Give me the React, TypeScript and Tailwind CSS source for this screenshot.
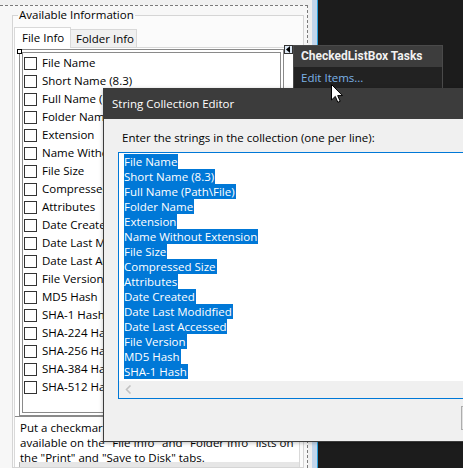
import React from 'react';

const LIST_ITEMS = [
  'File Name', 'Short Name (8.3)', 'Full Name (Path\\File)', 'Folder Name', 'Extension',
  'Name Without Extension', 'File Size', 'Compressed Size', 'Attributes', 'Date Created',
  'Date Last Modified', 'Date Last Accessed', 'File Version', 'MD5 Hash', 'SHA-1 Hash',
  'SHA-224 Hash', 'SHA-256 Hash', 'SHA-384 Hash', 'SHA-512 Hash',
];

const EDITOR_LINES = [
  'File Name', 'Short Name (8.3)', 'Full Name (Path\\File)', 'Folder Name', 'Extension',
  'Name Without Extension', 'File Size', 'Compressed Size', 'Attributes', 'Date Created',
  'Date Last Modidfied', 'Date Last Accessed', 'File Version', 'MD5 Hash', 'SHA-1 Hash',
];

export default function App() {
  return (
    <div className="relative w-[463px] h-[468px] overflow-hidden flex bg-[#1c1c1c] font-['Open_Sans',sans-serif] text-[11.5px] text-black">
      {/* Designer surface */}
      <div className="w-[312px] h-full bg-[#f0f0f0] flex flex-col">
        <div className="mt-[5px] w-[308px] flex-1 border-t border-r border-dashed border-[#7a7a7a] pt-[1px] bg-[#f7f7f7] flex flex-col">
          <fieldset className="ml-[12px] w-[292px] flex-1 border border-[#d5d5d5] bg-[#fbfbfb] flex flex-col">
            <legend className="ml-[5px] px-[1px] leading-[16px]">Available Information</legend>
            <div className="mt-[4px] ml-[1px] w-[286px] flex-1 flex flex-col">
              {/* Tab headers */}
              <div className="flex items-end h-[20px]">
                <div className="relative z-10 -mb-px h-[21px] w-[57px] bg-white border-t border-l border-r border-[#d9d9d9] pl-[7px] leading-[19px]">
                  File Info
                </div>
                <div className="h-[18px] w-[66px] bg-[#f0f0f0] border-t border-r border-[#d9d9d9] pl-[5px] leading-[18px]">
                  Folder Info
                </div>
              </div>
              {/* Tab page */}
              <div className="flex-1 bg-white border border-[#d9d9d9] border-b-0 flex flex-col">
                <div className="relative mt-[1px] ml-[4px] w-[265px] h-[367px] border border-[#8a8a8a] p-[2px]">
                  <div className="absolute -left-[3px] -top-[1px] w-[5px] h-[5px] bg-white border border-black" />
                  <div className="h-full border border-[#8a8a8a] pt-[1px] pl-[1px] overflow-hidden">
                    {LIST_ITEMS.map((item) => (
                      <div key={item} className="h-[18px] flex items-center whitespace-nowrap">
                        <span className="w-[13px] h-[13px] border border-[#333] bg-white mr-[5px] shrink-0" />
                        <span>{item}</span>
                      </div>
                    ))}
                  </div>
                </div>
                <div className="border-t border-[#8a8a8a] pt-[3px] pl-[5px] h-[46px] leading-[15px] whitespace-nowrap bg-white">
                  <div>Put a checkmark next to each item that should be</div>
                  <div>available on the "File Info" and "Folder Info" lists on</div>
                  <div>the "Print" and "Save to Disk" tabs.</div>
                </div>
                <div className="flex-1 bg-[#e6e6e6] border-l border-[#b5b5b5] ml-[4px]" />
              </div>
            </div>
          </fieldset>
        </div>
      </div>
      <div className="w-[6px] h-full bg-[#c2d6ec] border-r border-[#2aa1dc]" />
      <div className="flex-1 bg-[#1c1c1c]" />

      {/* Smart tag glyph */}
      <div className="absolute left-[284px] top-[45px] w-[9px] h-[9px] bg-[#dce8f5] border border-[#333] flex items-center justify-center">
        <svg width="5" height="7" viewBox="0 0 5 7"><path d="M4 0 L0 3.5 L4 7 Z" fill="#000" /></svg>
      </div>

      {/* Smart tag panel */}
      <div className="absolute left-[293px] top-[45px] w-[150px] h-[45px] bg-[#222222] border border-[#4a4a4a] flex flex-col">
        <div className="h-[21px] bg-[#3d3d3d] pl-[7px] font-['Roboto',sans-serif] font-bold text-[12px] text-[#f1f1f1] leading-[21px] whitespace-nowrap">
          CheckedListBox Tasks
        </div>
        <div className="pl-[7px] pt-[1px] text-[#7cb2e6] leading-[20px]">Edit Items...</div>
      </div>

      {/* String Collection Editor dialog */}
      <div className="absolute left-[103px] top-[88px] w-[380px] h-[354px] border border-[#3c3c3c] bg-[#f0f0f0] flex flex-col shadow-[0_1px_4px_rgba(0,0,0,0.25)]">
        <div className="h-[30px] bg-[#3c3c3c] text-white text-[11.5px] leading-[30px] pl-[8px] whitespace-nowrap">
          String Collection Editor
        </div>
        <div className="flex flex-col pl-[14px]">
          <div className="mt-[11px] ml-[4px] leading-[16px] whitespace-nowrap">
            Enter the strings in the collection (one per line):
          </div>
          <div className="mt-[6px] h-[247px] border border-[#0078d7] bg-white flex flex-col">
            <div className="flex-1 pt-[1px] pl-[5px] flex flex-col items-start">
              {EDITOR_LINES.map((line) => (
                <span key={line} className="h-[15px] leading-[15px] bg-[#0078d7] text-white whitespace-nowrap pr-[1px]">
                  {line}
                </span>
              ))}
            </div>
            <div className="h-[17px] bg-[#f0f0f0] flex items-center pl-[6px]">
              <svg width="7" height="9" viewBox="0 0 7 9">
                <path d="M5.5 0.5 L1.5 4.5 L5.5 8.5" fill="none" stroke="#c2c2c2" strokeWidth="1.6" />
              </svg>
            </div>
          </div>
          <div className="mt-[7px] ml-[343px] w-[75px] h-[24px] border border-[#adadad] bg-[#e1e1e1]" />
        </div>
      </div>

      {/* Mouse cursor */}
      <svg className="absolute left-[331px] top-[84px]" width="13" height="20" viewBox="0 0 13 20">
        <path d="M0.5 0.5 L0.5 16 L4.3 12.4 L6.8 18.3 L9.2 17.3 L6.7 11.6 L11.5 11.6 Z" fill="#fff" stroke="#000" strokeWidth="1" strokeLinejoin="miter" />
      </svg>
    </div>
  );
}
